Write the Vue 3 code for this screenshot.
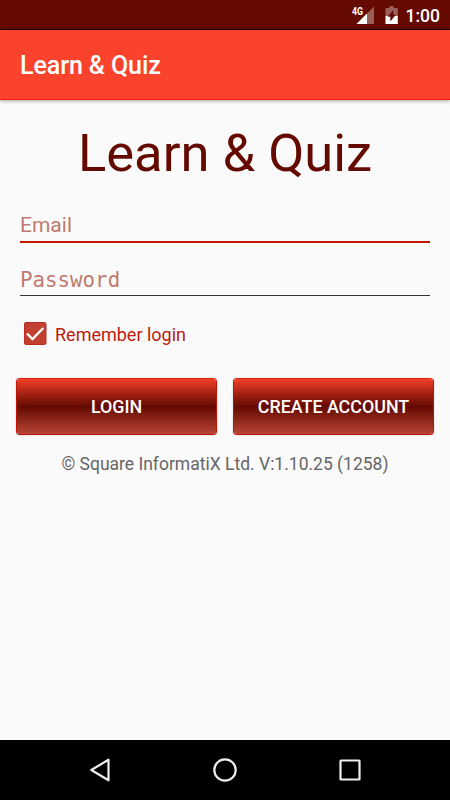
<script setup>
import { ref } from 'vue'

const email = ref('')
const password = ref('')
const remember = ref(true)
</script>

<template>
  <div class="screen">
    <div class="status">
      <svg class="signal" width="24" height="22" viewBox="0 0 24 22">
        <path d="M23 2.500V20H5.500z" fill="#fff" fill-opacity=".35" />
        <path d="M16 9.500V20H5.500z" fill="#fff" />
        <text x="1" y="10.500" class="net" textLength="11" lengthAdjust="spacingAndGlyphs">4G</text>
      </svg>
      <svg class="battery" width="14" height="20" viewBox="0 0 14 20">
        <path d="M4.500 1h4v2H12.800v8H.5V3h4z" fill="#fff" fill-opacity=".35" />
        <path d="M.5 11h12.300v8H.5z" fill="#fff" />
        <path d="M8.300 5v4.700h2.500L5.300 16.500v-4.700H2.700z" fill="#640a00" />
      </svg>
      <span class="clock">1:00</span>
    </div>
    <header class="appbar">Learn &amp; Quiz</header>
    <main class="content">
      <h1 class="brand">Learn &amp; Quiz</h1>
      <input v-model="email" class="field" type="text" placeholder="Email" />
      <input v-model="password" class="field mono" type="password" placeholder="Password" />
      <label class="remember">
        <input v-model="remember" class="native" type="checkbox" />
        <svg width="24" height="24" viewBox="0 0 24 24">
          <rect x=".5" y=".5" width="21.500" height="22" rx="1.500" fill="#c2402f" stroke="#b92d20" />
          <path v-if="remember" d="M3 11.500l5.500 5.500L19.300 6" fill="none" stroke="#fff" stroke-width="2.300" />
        </svg>
        <span>Remember login</span>
      </label>
      <div class="actions">
        <button class="btn">LOGIN</button>
        <button class="btn">CREATE ACCOUNT</button>
      </div>
      <p class="version">© Square InformatiX Ltd. V:1.10.25 (1258)</p>
    </main>
    <nav class="navbar">
      <svg width="26" height="26" viewBox="0 0 26 26"><path d="M21.500 2.700v20.600L4.300 13z" /></svg>
      <svg width="26" height="26" viewBox="0 0 26 26"><circle cx="13" cy="13" r="10.700" /></svg>
      <svg width="26" height="26" viewBox="0 0 26 26"><rect x="3.500" y="3.500" width="19" height="19" rx=".5" /></svg>
    </nav>
  </div>
</template>

<style>
body {
  margin: 0;
}
</style>

<style scoped>
.screen {
  width: 450px;
  height: 800px;
  display: flex;
  flex-direction: column;
  overflow: hidden;
  background: #fafafa;
  font-family: Roboto, sans-serif;
}
.status {
  box-sizing: border-box;
  height: 30px;
  flex: none;
  display: flex;
  justify-content: flex-end;
  align-items: center;
  padding-right: 10px;
  background: #640a00;
  border-bottom: 1px solid #260300;
  color: #fff;
}
.signal {
  margin: 1px 10px 0 0;
}
.net {
  font-size: 11px;
  font-weight: 700;
  fill: #fff;
}
.battery {
  margin: 1px 7px 0 0;
}
.clock {
  font-size: 17.500px;
  font-weight: 500;
  line-height: 29px;
  padding-top: 3px;
}
.appbar {
  box-sizing: border-box;
  height: 70px;
  flex: none;
  padding-left: 20px;
  line-height: 72px;
  font-size: 25px;
  letter-spacing: -.08px;
  font-weight: 500;
  color: #fff;
  background: #fa432d;
  border-bottom: 1px solid #f01d12;
  box-shadow: 0 1px 4px rgba(0, 0, 0, .35);
}
.content {
  flex: 1;
  display: flex;
  flex-direction: column;
}
.brand {
  margin: 20px 0 0;
  height: 66px;
  line-height: 66px;
  font-size: 52.500px;
  font-weight: 400;
  text-align: center;
  color: #640a00;
}
.field {
  box-sizing: border-box;
  margin: 22px 20px 0;
  padding: 1px 0 0;
  height: 35px;
  border: 0;
  border-radius: 0;
  outline: 0;
  background: transparent;
  border-bottom: 2px solid #c41800;
  font: 400 21px Roboto, sans-serif;
}
.field::placeholder {
  color: #bf7a70;
  opacity: 1;
}
.mono {
  margin-top: 18px;
  padding-top: 3px;
  border-bottom: 1px solid #333;
  font: 400 20.800px "DejaVu Sans Mono", monospace;
}
.remember {
  display: flex;
  align-items: center;
  gap: 7px;
  height: 30px;
  margin: 23px 0 0 24px;
  font-size: 18px;
  color: #bd1b0d;
}
.native {
  position: absolute;
  opacity: 0;
}
.actions {
  display: flex;
  gap: 16px;
  padding: 29px 16px 0;
}
.btn {
  flex: 1 1 0;
  height: 57px;
  padding: 0 0 1px;
  border: 1px solid #bb1508;
  border-top-color: #e02212;
  border-radius: 4px;
  background: linear-gradient(#f03e29, #640a00 50%, #b84435) padding-box;
  box-shadow: 0 0 2px rgba(0, 0, 0, .22);
  color: #fff;
  font: 500 17.850px Roboto, sans-serif;
}
.version {
  margin: 18px 0 0;
  text-align: center;
  font-size: 17.500px;
  line-height: 22px;
  color: #666;
}
.navbar {
  height: 60px;
  flex: none;
  display: flex;
  align-items: center;
  justify-content: center;
  gap: 99px;
  background: #000;
  fill: none;
  stroke: #eee;
  stroke-width: 2.200px;
  stroke-linejoin: round;
}
</style>
